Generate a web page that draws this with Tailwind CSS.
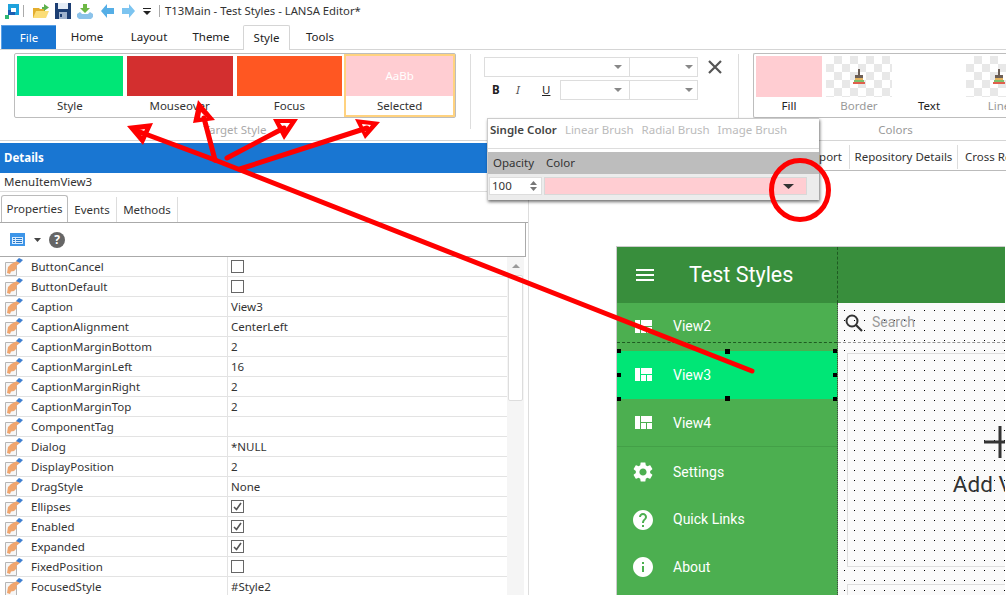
<!DOCTYPE html>
<html lang="en">
<head>
  <meta charset="UTF-8" />
  <title>T13Main - Test Styles - LANSA Editor*</title>
  <script src="https://cdn.jsdelivr.net/npm/@tailwindcss/browser@4"></script>
</head>
<body class="bg-white">
<svg class="hidden">
  <symbol id="quilt" viewBox="0 0 24 24"><path fill="#fff" d="M10 18h5v-6h-5v6zm-6 0h5V5H4v13zm12 0h5v-6h-5v6zM10 5v6h11V5H10z"/></symbol>
  <symbol id="hand" viewBox="0 0 18 18">
    <path fill="#f6f6f6" stroke="#b5b5b5" d="M.5 4.500h11v13H.5z"/>
    <path fill="#f0a56e" d="M2 15l1-6 3-3 6-3 3 2-4 3 1 2-3 3-3 .5-1 2.500z"/>
    <path fill="#3f7fd0" d="M11 3l3-3 4 2-3 3z"/>
  </symbol>
  <symbol id="brush" viewBox="0 0 14 16">
    <path fill="#6d5f58" d="M6 0h2v6h3v3H3V6h3z"/>
    <path fill="#e3b35d" d="M3 9h8v2H3z"/><path fill="#7fbf6b" d="M2 11h10v2H2z"/><path fill="#e0604c" d="M1 13h12v2H1z"/>
  </symbol>
</svg>

<div class="relative w-[1006px] h-[595px] overflow-hidden bg-white text-[#333] text-[11.500px] font-['Noto_Sans','Open_Sans',sans-serif]">

  <!-- title bar -->
  <div class="flex items-center h-[25px] pl-[5px] pb-[3px]">
    <svg width="14" height="15" viewBox="0 0 14 15" class="mr-[4px]"><path fill="#1fa2dc" d="M3 0h11v11H3z"/><path fill="#fff" d="M6 4h5v4H6z"/><path fill="#1c5fb4" d="M3 6h3v2h4v3H3z"/><path fill="#2eb872" d="M0 11h4v4H0z"/></svg>
    <div class="w-px h-[12px] bg-[#aaa] mr-[9px]"></div>
    <svg width="16" height="15" viewBox="0 0 16 15" class="mr-[6px]"><path fill="#e3ad2e" d="M0 4h6l1 1h5v9H0z"/><path fill="#fbdd78" d="M3 7h13l-3 7H0z"/><path fill="#5eb14e" d="M9 3h2V0l5 3.500L11 7V5H9z"/></svg>
    <svg width="16" height="16" viewBox="0 0 16 16" class="mr-[6px]"><path fill="#1c3e73" d="M0 0h16v16H0z"/><path fill="#e4ecf6" d="M3 0h10v6H3z"/><path fill="#9fb2cc" d="M4 9h8v7H4z"/><path fill="#1c3e73" d="M5 11h2v3H5z"/></svg>
    <svg width="16" height="15" viewBox="0 0 16 15" class="mr-[8px]"><path fill="#6db845" d="M6 0h4v4h3L8 9 3 4h3z"/><path fill="#8cc3ea" d="M0 10l3-2 2 2h6l2-2 3 2v3l-2 2H2l-2-2z"/></svg>
    <svg width="13" height="14" viewBox="0 0 13 14" class="mr-[8px]"><path fill="#55aee6" d="M0 7l6-7v4h7v6H6v4z"/></svg>
    <svg width="13" height="14" viewBox="0 0 13 14" class="mr-[8px]"><path fill="#7cc4f0" d="M13 7L7 0v4H0v6h7v4z"/></svg>
    <svg width="8" height="7" viewBox="0 0 8 7" class="mr-[8px]"><path fill="#222" d="M0 0h8v1H0zM0 3h8L4 7z"/></svg>
    <div class="w-px h-[12px] bg-[#aaa] mr-[5px]"></div>
    <span class="text-[11.300px] leading-none">T13Main - Test Styles - LANSA Editor*</span>
  </div>

  <!-- ribbon tabs -->
  <div class="flex h-[25px] pl-[1px] border-b border-[#d5d5d5]">
    <div class="w-[55px] h-[24px] bg-[#1976d2] text-white flex items-center justify-center border-t border-l border-[#5aa0e6]">File</div>
    <div class="w-[62px] flex items-center justify-center text-[#222]">Home</div>
    <div class="w-[62px] flex items-center justify-center text-[#222]">Layout</div>
    <div class="w-[62px] flex items-center justify-center text-[#222]">Theme</div>
    <div class="w-[47px] h-[25px] flex items-center justify-center bg-white border border-b-0 border-[#d5d5d5] rounded-t-[2px] text-[#222] ml-[1px]">Style</div>
    <div class="w-[60px] flex items-center justify-center text-[#222]">Tools</div>
  </div>

  <!-- ribbon -->
  <div class="flex h-[91px] pl-[14px] pt-[3px] border-b border-[#d5d5d5]">
    <div class="w-[442px] shrink-0">
      <div class="flex h-[65px] border border-[#bdbdbd] rounded-[2px] pl-[2px] pt-[2px] gap-[4px]">
        <div class="w-[106px] text-center"><div class="h-[40px] bg-[#00e676]"></div><div class="mt-[1px]">Style</div></div>
        <div class="w-[106px] text-center"><div class="h-[40px] bg-[#d32f2f]"></div><div class="mt-[1px]">Mouseover</div></div>
        <div class="w-[106px] text-center"><div class="h-[40px] bg-[#ff5722]"></div><div class="mt-[1px]">Focus</div></div>
        <div class="w-[111px] h-[63px] -mt-[2px] -ml-[2px] border-2 border-[#ffd27f] text-center">
          <div class="h-[40px] bg-[#ffcdd2] text-white flex items-center justify-center">AaBb</div><div class="mt-[1px]">Selected</div>
        </div>
      </div>
      <div class="text-center text-[#aaa] mt-[3px]">Target Style</div>
    </div>
    <div class="w-px h-[75px] shrink-0 bg-[#ddd] ml-[14px] mt-[1px]"></div>

    <div class="w-[241px] shrink-0 ml-[13px] pt-[4px]">
      <div class="flex items-center h-[20px]">
        <div class="w-[146px] h-[20px] border border-[#ddd] flex items-center justify-end pr-[7px]"><svg width="8" height="4"><path fill="#888" d="M0 0h8L4 4z"/></svg></div>
        <div class="w-[68px] h-[20px] border border-l-0 border-[#ddd] flex items-center justify-end pr-[4px]"><svg width="8" height="4"><path fill="#888" d="M0 0h8L4 4z"/></svg></div>
        <svg width="14" height="14" viewBox="0 0 14 14" class="ml-[10px]"><path stroke="#555" stroke-width="2.200" d="M1 1l12 12M13 1L1 13"/></svg>
      </div>
      <div class="flex items-center h-[20px] mt-[3px]">
        <div class="w-[76px] flex items-center pl-[8px] text-[#222]">
          <b class="w-[24px]">B</b><i class="w-[26px] text-[#555]">I</i><u>U</u>
        </div>
        <div class="w-[70px] h-[20px] border border-[#ddd] flex items-center justify-end pr-[7px]"><svg width="8" height="4"><path fill="#888" d="M0 0h8L4 4z"/></svg></div>
        <div class="w-[68px] h-[20px] border border-l-0 border-[#ddd] flex items-center justify-end pr-[4px]"><svg width="8" height="4"><path fill="#888" d="M0 0h8L4 4z"/></svg></div>
      </div>
    </div>
    <div class="w-px h-[75px] shrink-0 bg-[#ddd] ml-[13px] mt-[1px]"></div>

    <div class="w-[260px] ml-[14px] shrink-0">
      <div class="flex h-[65px] border border-[#bdbdbd] border-r-0 rounded-l-[2px] pl-[2px] pt-[2px] gap-[4px]">
        <div class="w-[66px] shrink-0 text-center"><div class="h-[41px] bg-[#ffcdd2]"></div><div class="text-[#222]">Fill</div></div>
        <div class="w-[66px] shrink-0 text-center text-[#999]">
          <div class="h-[41px] flex items-center justify-center bg-[conic-gradient(#e8e8e8_25%,#fff_0_50%,#e8e8e8_0_75%,#fff_0)] bg-[length:16px_16px]"><svg width="14" height="16"><use href="#brush"/></svg></div><div>Border</div>
        </div>
        <div class="w-[66px] shrink-0 text-center"><div class="h-[41px]"></div><div class="text-[#222]">Text</div></div>
        <div class="w-[66px] shrink-0 text-center text-[#999]">
          <div class="h-[41px] flex items-center justify-center bg-[conic-gradient(#e8e8e8_25%,#fff_0_50%,#e8e8e8_0_75%,#fff_0)] bg-[length:16px_16px]"><svg width="14" height="16"><use href="#brush"/></svg></div><div>Line</div>
        </div>
      </div>
      <div class="w-[285px] text-center text-[#999] mt-[3px]">Colors</div>
    </div>
  </div>

  <!-- body -->
  <div class="flex h-[454px]">
    <!-- details panel -->
    <div class="w-[529px] shrink-0 border-r border-[#ddd] pt-[2px]">
      <div class="h-[30px] bg-[#1976d2] text-white font-bold flex items-center pl-[4px]">Details</div>
      <div class="h-[19px] border-b border-[#ddd] flex items-center pl-[4px]">MenuItemView3</div>
      <div class="flex h-[31px] pl-[1px] items-end border-b border-[#aaa]">
        <div class="w-[67px] h-[27px] border border-b-0 border-[#bbb] rounded-t-[3px] flex items-center justify-center">Properties</div>
        <div class="w-[49px] h-[25px] border-r border-[#ddd] flex items-center justify-center">Events</div>
        <div class="w-[61px] h-[25px] border-r border-[#ddd] flex items-center justify-center">Methods</div>
      </div>
      <div class="w-[526px] h-[34px] border-r border-b border-[#aaa] flex items-center pl-[10px]">
        <svg width="15" height="13" viewBox="0 0 15 13"><path fill="#3d95e8" d="M0 0h15v13H0z"/><path fill="#d8ecff" d="M2 4h11v7H2z"/><path fill="#2878c8" d="M3 5h2v1H3zM6 5h6v1H6zM3 7h2v1H3zM6 7h6v1H6zM3 9h2v1H3zM6 9h6v1H6z"/></svg>
        <svg width="7" height="4" class="ml-[9px]"><path fill="#444" d="M0 0h7L3.500 4z"/></svg>
        <div class="w-[16px] h-[16px] ml-[8px] rounded-full bg-[#666] text-white font-bold text-[12px] leading-[16px] text-center">?</div>
      </div>
      <div class="flex w-[525px]">
        <div id="rows" class="w-[507px] shrink-0"></div>
        <div class="w-[17px] bg-[#f5f5f5] flex flex-col items-center pt-[7px]">
          <svg width="8" height="4"><path fill="#999" d="M4 0l4 4H0z"/></svg>
          <div class="w-[15px] h-[126px] mt-[7px] bg-white border border-[#ddd] rounded-[2px]"></div>
        </div>
      </div>
    </div>

    <!-- designer -->
    <div class="flex-1 min-w-0 overflow-hidden">
      <div class="h-[30px] border-b border-[#bbb] pt-[3px] flex items-center whitespace-nowrap">
        <div class="w-[321px] shrink-0 h-[24px] border-r border-[#ddd] flex items-center justify-end pr-[7px]">Support</div>
        <div class="w-[108px] shrink-0 h-[24px] border-r border-[#ddd] flex items-center justify-center">Repository Details</div>
        <div class="pl-[7px]">Cross Reference</div>
      </div>

      <div class="ml-[87px] mt-[75px] w-[389px] border-l border-t border-[#ccc] font-['Roboto',sans-serif]">
        <div class="flex h-[56px] bg-[#388e3c]">
          <div class="w-[221px] shrink-0 border-r border-dashed border-[#1f5a22] flex items-center pl-[19px] text-white">
            <svg width="18" height="12" viewBox="0 0 18 12"><path fill="#fff" d="M0 0h18v2H0zM0 5h18v2H0zM0 10h18v2H0z"/></svg>
            <span class="ml-[35px] text-[21.500px]">Test Styles</span>
          </div>
        </div>
        <div class="flex h-[292px]">
          <div class="w-[221px] shrink-0 bg-[#4caf50] border-r border-dotted border-[#444] text-white text-[14px]">
            <div class="h-[40px] pt-[8px] border-b border-dashed border-[#1f5a22] flex items-center pl-[14px]"><svg width="24" height="24"><use href="#quilt"/></svg><span class="ml-[18px]">View2</span></div>
            <div class="h-[8px]"></div>
            <div class="relative h-[48px] bg-[#00e676] flex items-center pl-[14px]">
              <svg width="24" height="24"><use href="#quilt"/></svg><span class="ml-[18px]">View3</span>
              <span class="absolute left-0 -top-[2px] w-[4px] h-[4px] bg-black"></span>
              <span class="absolute left-[108px] -top-[2px] w-[5px] h-[5px] bg-black"></span>
              <span class="absolute right-0 -top-[2px] w-[4px] h-[4px] bg-black"></span>
              <span class="absolute left-0 top-[22px] w-[4px] h-[4px] bg-black"></span>
              <span class="absolute right-0 top-[22px] w-[4px] h-[4px] bg-black"></span>
              <span class="absolute left-0 -bottom-[2px] w-[4px] h-[4px] bg-black"></span>
              <span class="absolute left-[108px] -bottom-[2px] w-[5px] h-[5px] bg-black"></span>
              <span class="absolute right-0 -bottom-[2px] w-[4px] h-[4px] bg-black"></span>
            </div>
            <div class="h-[48px] pt-[1px] border-b border-[#43a047] flex items-center pl-[14px]"><svg width="24" height="24"><use href="#quilt"/></svg><span class="ml-[18px]">View4</span></div>
            <div class="h-[48px] pt-[2px] flex items-center pl-[14px]"><svg width="24" height="24" viewBox="0 0 24 24"><path fill="#fff" d="M19.14 12.94c.04-.3.06-.61.06-.94 0-.32-.02-.64-.07-.94l2.03-1.58c.18-.14.23-.41.12-.61l-1.92-3.32c-.12-.22-.37-.29-.59-.22l-2.39.96c-.5-.38-1.03-.7-1.62-.94l-.36-2.54c-.04-.24-.24-.41-.48-.41h-3.84c-.24 0-.43.17-.47.41l-.36 2.54c-.59.24-1.13.57-1.62.94l-2.39-.96c-.22-.08-.47 0-.59.22L2.74 8.87c-.12.21-.08.47.12.61l2.03 1.58c-.05.3-.09.63-.09.94s.02.64.07.94l-2.03 1.58c-.18.14-.23.41-.12.61l1.92 3.32c.12.22.37.29.59.22l2.39-.96c.5.38 1.03.7 1.62.94l.36 2.54c.05.24.24.41.48.41h3.84c.24 0 .44-.17.47-.41l.36-2.54c.59-.24 1.13-.56 1.62-.94l2.39.96c.22.08.47 0 .59-.22l1.92-3.32c.12-.22.07-.47-.12-.61l-2.01-1.58zM12 15.6c-1.98 0-3.6-1.62-3.6-3.6s1.62-3.6 3.6-3.6 3.6 1.62 3.6 3.6-1.62 3.6-3.6 3.6z"/></svg><span class="ml-[18px]">Settings</span></div>
            <div class="h-[47px] pt-[2px] flex items-center pl-[14px]"><svg width="24" height="24" viewBox="0 0 24 24"><path fill="#fff" d="M12 2C6.480 2 2 6.480 2 12s4.480 10 10 10 10-4.480 10-10S17.520 2 12 2zm1 17h-2v-2h2v2zm2.070-7.750l-.9.920C13.450 12.900 13 13.500 13 15h-2v-.5c0-1.100.450-2.100 1.170-2.830l1.240-1.260c.370-.360.590-.860.590-1.410 0-1.100-.9-2-2-2s-2 .9-2 2H8c0-2.210 1.790-4 4-4s4 1.790 4 4c0 .880-.360 1.680-.930 2.250z"/></svg><span class="ml-[18px]">Quick Links</span></div>
            <div class="h-[48px] pt-[2px] flex items-center pl-[14px]"><svg width="24" height="24" viewBox="0 0 24 24"><path fill="#fff" d="M12 2C6.480 2 2 6.480 2 12s4.480 10 10 10 10-4.480 10-10S17.520 2 12 2zm1 15h-2v-6h2v6zm0-8h-2V7h2v2z"/></svg><span class="ml-[18px]">About</span></div>
          </div>

          <div class="flex-1 min-w-0 overflow-hidden bg-[#fafafa] bg-[radial-gradient(circle_at_6.500px_7.500px,#000_0.9px,transparent_0.95px)] bg-[length:10px_10px]">
            <div class="h-[40px] border-b border-dashed border-[#999] flex items-center pl-[6px] text-[#999] text-[14px]">
              <svg width="20" height="20" viewBox="0 0 20 20" class="mr-[8px]"><circle cx="8" cy="8" r="5.500" fill="none" stroke="#333" stroke-width="2"/><path stroke="#333" stroke-width="2.200" d="M12 12l6 6"/></svg>
              Search
            </div>
            <div class="ml-[9px] mt-[10px] w-[306px] h-[214px] border border-[#ddd] text-center text-[#333]">
              <div class="mt-[70px] h-[36px] flex items-center justify-center"><svg width="34" height="34" viewBox="0 0 34 34"><path fill="#333" d="M15.500 1h3v32h-3zM1 15.500h32v3H1z"/></svg></div>
              <div class="mt-[9px] text-[22.500px] leading-[30px] whitespace-nowrap">Add View</div>
            </div>
            <div class="ml-[9px] mt-[17px] w-[306px] h-[40px] border border-[#ddd]"></div>
          </div>
        </div>
      </div>
    </div>
  </div>

  <!-- colour dropdown over the ribbon -->
  <div class="absolute left-[487px] top-[118px] w-[332px] h-[82px] bg-white border-l border-t border-[#ccc] shadow-[1px_2px_3px_rgba(0,0,0,0.55)]">
    <div class="h-[22px] flex items-center pl-[2px] gap-[8px] text-[#bbb] text-[11.500px] whitespace-nowrap">
      <b class="text-[#444] font-semibold">Single Color</b><span>Linear Brush</span><span>Radial Brush</span><span>Image Brush</span>
    </div>
    <div class="border-t border-[#ddd] mt-[7px]"></div>
    <div class="h-[22px] mt-[3px] bg-[#bdbdbd] flex items-center pl-[5px]"><span class="w-[53px]">Opacity</span><span>Color</span></div>
    <div class="h-[26px] bg-[#ececec] pl-[1px] pt-[3px] flex">
      <div class="w-[53px] h-[18px] bg-white border border-[#ddd] flex items-center justify-between pl-[2px] pr-[4px]">100
        <svg width="7" height="10" viewBox="0 0 7 10"><path fill="#777" d="M3.500 0L7 4H0zM3.500 10L0 6h7z"/></svg>
      </div>
      <div class="w-[263px] h-[18px] ml-[2px] bg-[#ffcdd2] border border-[#d8d8d8] flex items-center justify-end pr-[12px]">
        <svg width="11" height="5"><path fill="#333" d="M0 0h11L5.500 5z"/></svg>
      </div>
    </div>
  </div>

  <!-- hand drawn annotations -->
  <svg class="absolute left-0 top-0 pointer-events-none" width="1006" height="595" viewBox="0 0 1006 595">
    <g stroke="#f00" stroke-width="5" stroke-linecap="round" fill="none">
      <path d="M215 160L752 371"/>
      <path d="M215 160L140 132"/>
      <path d="M215 160L204 118"/>
      <path d="M227 158L284 128"/>
      <path d="M240 169L367 128"/>
      <ellipse cx="800" cy="190" rx="28.500" ry="29.500" stroke-width="5"/>
    </g>
    <g fill="#f00" fill-rule="evenodd">
      <path d="M127 126L153 123L143 145zM139 130L145 129L142 136z"/>
      <path d="M198 100L215 120L193 123zM201 112L207 118L200 118z"/>
      <path d="M298 119L273 119L284 140zM280 123L290 123L285 130z"/>
      <path d="M380 122L355 119L365 139zM362 124L371 125L365 132z"/>
    </g>
  </svg>
</div>

<script>
// name, value, kind: t = text, c = checkbox off, k = checkbox on
const props = [
  ["ButtonCancel", "", "c"], ["ButtonDefault", "", "c"], ["Caption", "View3", "t"],
  ["CaptionAlignment", "CenterLeft", "t"], ["CaptionMarginBottom", "2", "t"], ["CaptionMarginLeft", "16", "t"],
  ["CaptionMarginRight", "2", "t"], ["CaptionMarginTop", "2", "t"], ["ComponentTag", "", "t"],
  ["Dialog", "*NULL", "t"], ["DisplayPosition", "2", "t"], ["DragStyle", "None", "t"],
  ["Ellipses", "", "k"], ["Enabled", "", "k"], ["Expanded", "", "k"],
  ["FixedPosition", "", "c"], ["FocusedStyle", "#Style2", "t"]
];
const box = (on) => `<div class="w-[13px] h-[13px] border border-[#666] flex items-center justify-center">${on ? '<svg width="9" height="9" viewBox="0 0 9 9"><path fill="none" stroke="#555" stroke-width="1.600" d="M1 5l2.500 2.500L8 1"/></svg>' : ''}</div>`;
document.getElementById("rows").innerHTML = props.map(([name, value, kind]) => `
  <div class="flex h-[20px] border-b border-[#e3e3e3]">
    <div class="w-[228px] shrink-0 border-r border-[#e3e3e3] flex items-center pl-[5px]">
      <svg width="18" height="18" class="mr-[8px]"><use href="#hand"/></svg><span>${name}</span>
    </div>
    <div class="flex items-center pl-[3px]">${kind === "t" ? value : box(kind === "k")}</div>
  </div>`).join("");
</script>
</body>
</html>
